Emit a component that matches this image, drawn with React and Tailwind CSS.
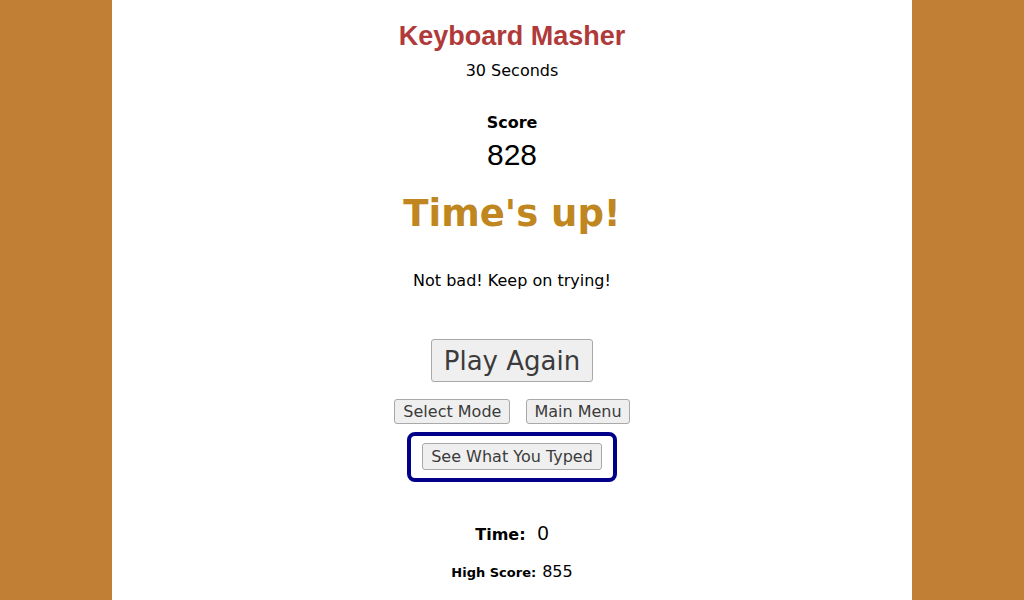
import React from 'react';

const btn =
  "bg-[#efefef] border border-[#a9a9a9] rounded-[3px] text-[#3b3b3b] font-['DejaVu_Sans',sans-serif] leading-[19px]";

export default function App() {
  return (
    <div className="min-h-[600px] bg-[#c17f36] flex justify-center">
      <div className="w-[800px] bg-white flex flex-col items-center pt-[20px] font-['DejaVu_Sans',sans-serif] text-black">
        <h1 className="text-[27px] leading-[32px] font-bold text-[#b03a3a] font-['Liberation_Sans',sans-serif]">
          Keyboard Masher
        </h1>
        <div className="mt-[9px] text-[16px] leading-[20px]">30 Seconds</div>

        <div className="mt-[32px] text-[16px] leading-[20px] font-bold">Score</div>
        <div className="mt-[5px] text-[30px] leading-[34px] font-['Liberation_Sans',sans-serif]">828</div>

        <div className="mt-[20px] text-[37px] leading-[44px] font-bold text-[#c0861f]">Time's up!</div>

        <p className="mt-[35px] text-[16px] leading-[20px]">Not bad! Keep on trying!</p>

        <button className={`${btn} mt-[48px] h-[43px] px-[12px] text-[26px] leading-[30px]`}>Play Again</button>

        <div className="mt-[17px] flex gap-[16px]">
          <button className={`${btn} h-[25px] px-[8px] text-[16px]`}>Select Mode</button>
          <button className={`${btn} h-[25px] px-[7px] text-[16px]`}>Main Menu</button>
        </div>

        <div className="mt-[8px] border-4 border-[#00008b] rounded-[8px] px-[11px] pt-[7px] pb-[8px]">
          <button className={`${btn} h-[27px] px-[8px] text-[16px]`}>See What You Typed</button>
        </div>

        <div className="mt-[41px] flex items-baseline gap-[12px] leading-[20px]">
          <span className="text-[16px] font-bold">Time:</span>
          <span className="text-[20px] font-['Liberation_Sans',sans-serif]">0</span>
        </div>

        <div className="mt-[17px] flex items-baseline gap-[6px] leading-[20px]">
          <span className="text-[13px] font-bold">High Score:</span>
          <span className="text-[16px]">855</span>
        </div>
      </div>
    </div>
  );
}
